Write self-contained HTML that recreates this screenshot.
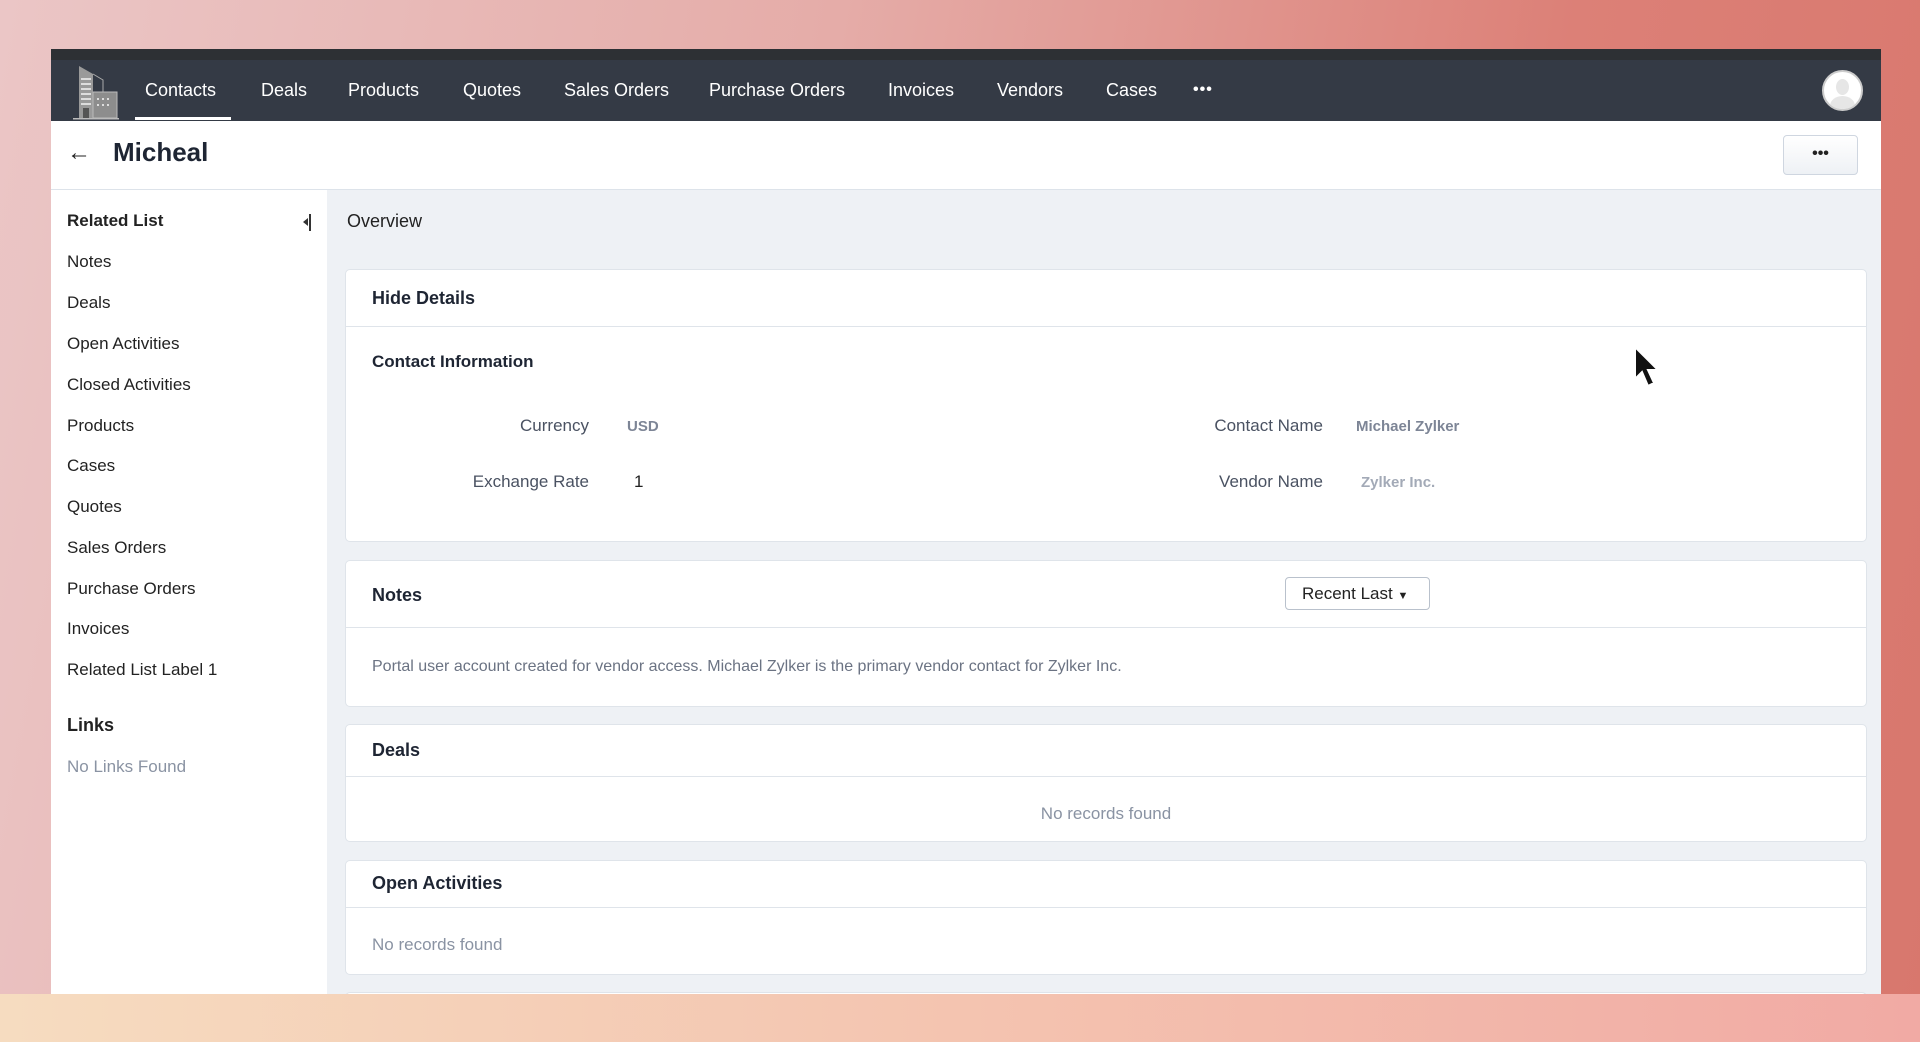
<!DOCTYPE html>
<html><head><meta charset="utf-8"><style>
*{margin:0;padding:0;box-sizing:border-box}
body{width:1920px;height:1042px;overflow:hidden;position:relative;font-family:"Liberation Sans",sans-serif;
background:linear-gradient(100deg,#ebc6c6 0%,#e5aca8 40%,#dc8077 75%,#d8776d 100%);}
.bot{position:absolute;left:0;top:994px;width:1920px;height:48px;background:linear-gradient(90deg,#f6dcc0,#f4c4b0 50%,#f1aaa4)}
.a{position:absolute;white-space:nowrap}
.frame{position:absolute;left:51px;top:49px;width:1830px;height:945px;background:#eef1f5;overflow:hidden}
.strip{position:absolute;left:0;top:0;width:1830px;height:11px;background:#2d3034}
.nav{position:absolute;left:0;top:11px;width:1830px;height:61px;background:#343a45}
.nav .a{color:#fff;font-size:18px;top:20px}
.hdr{position:absolute;left:0;top:72px;width:1830px;height:69px;background:#fff;border-bottom:1px solid #dde3ea}
.side{position:absolute;left:0;top:141px;width:276px;height:804px;background:#fff}
.side .a{font-size:17px;color:#222;left:16px}
.card{position:absolute;left:294px;width:1522px;background:#fff;border:1px solid #dfe4ea;border-radius:5px}
.card .h{position:absolute;left:0;width:100%;border-bottom:1px solid #dfe4ea}
.t{font-size:18px;font-weight:bold;color:#1e2533}
.lbl{font-size:17px;color:#4a5262}
.g{color:#8a93a3}
</style></head><body>
<div class="bot"></div>
<div class="frame">
<div class="strip"></div>
<div class="nav">
<svg class="a" style="left:18px;top:2px" width="52" height="58" viewBox="0 0 52 58"><path d="M10 4 L24 12 L24 56 L10 56Z" fill="#9a9a9a"/><path d="M24 12 L34 18 L34 30" stroke="#aaa" fill="none"/><rect x="24" y="30" width="24" height="26" fill="#8d8d8d" stroke="#bbb"/><g fill="#ddd"><rect x="12" y="16" width="10" height="2"/><rect x="12" y="21" width="10" height="2"/><rect x="12" y="26" width="10" height="2"/><rect x="12" y="31" width="10" height="2"/><rect x="12" y="36" width="10" height="2"/><rect x="12" y="41" width="10" height="2"/><rect x="14" y="46" width="6" height="10" fill="#555"/><rect x="28" y="36" width="2" height="2"/><rect x="33" y="36" width="2" height="2"/><rect x="38" y="36" width="2" height="2"/><rect x="28" y="42" width="2" height="2"/><rect x="33" y="42" width="2" height="2"/><rect x="38" y="42" width="2" height="2"/></g><rect x="4" y="56" width="46" height="1.5" fill="#bbb"/></svg>
<div class="a" style="left:94px">Contacts</div>
<div class="a" style="left:84px;top:57px;width:96px;height:3px;background:#fff"></div>
<div class="a" style="left:210px">Deals</div>
<div class="a" style="left:297px">Products</div>
<div class="a" style="left:412px">Quotes</div>
<div class="a" style="left:513px">Sales Orders</div>
<div class="a" style="left:658px">Purchase Orders</div>
<div class="a" style="left:837px">Invoices</div>
<div class="a" style="left:946px">Vendors</div>
<div class="a" style="left:1055px">Cases</div>
<div class="a" style="left:1142px;top:21px !important;font-weight:bold;letter-spacing:1px;font-size:16px">•••</div>
<div class="a" style="left:1771px;top:10px;width:41px;height:41px;border-radius:50%;background:#fff;border:2px solid #ccc;overflow:hidden"><div style="position:absolute;left:12px;top:7px;width:13px;height:16px;border-radius:50%;background:#e6e6e6"></div><div style="position:absolute;left:6px;top:24px;width:25px;height:20px;border-radius:50%;background:#e6e6e6"></div></div>
</div>
<div class="hdr">
<div class="a" style="left:16px;top:18px;font-size:24px;color:#222">←</div>
<div class="a" style="left:62px;top:16px;font-size:26px;font-weight:bold;color:#1e2533">Micheal</div>
<div class="a" style="left:1732px;top:14px;width:75px;height:40px;border:1px solid #cfd6e0;border-radius:4px;background:linear-gradient(#fff,#eef1f5);text-align:center;line-height:36px;font-size:16px;font-weight:bold;color:#222">•••</div>
</div>
<div class="side">
<div class="a" style="top:21px;font-weight:bold">Related List</div>
<div class="a" style="left:258px;top:24px;width:2px;height:17px;background:#333"></div>
<div class="a" style="left:252px;top:28px;border:4px solid transparent;border-right:5px solid #333;border-left:0"></div>
<div class="a" style="top:62px">Notes</div>
<div class="a" style="top:103px">Deals</div>
<div class="a" style="top:144px">Open Activities</div>
<div class="a" style="top:185px">Closed Activities</div>
<div class="a" style="top:226px">Products</div>
<div class="a" style="top:266px">Cases</div>
<div class="a" style="top:307px">Quotes</div>
<div class="a" style="top:348px">Sales Orders</div>
<div class="a" style="top:389px">Purchase Orders</div>
<div class="a" style="top:429px">Invoices</div>
<div class="a" style="top:470px">Related List Label 1</div>
<div class="a" style="top:525px;font-weight:bold;font-size:18px">Links</div>
<div class="a" style="top:567px;color:#8a93a3">No Links Found</div>
</div>
<div class="a" style="left:296px;top:162px;font-size:18px;color:#222">Overview</div>
<div class="card" style="top:220px;height:273px">
<div class="h" style="top:0;height:57px"></div>
<div class="a t" style="left:26px;top:18px">Hide Details</div>
<div class="a" style="left:26px;top:82px;font-size:17px;font-weight:bold;color:#1e2533">Contact Information</div>
<div class="a lbl" style="right:1277px;top:146px">Currency</div>
<div class="a" style="left:281px;top:148px;font-size:15px;font-weight:bold;color:#7d8596">USD</div>
<div class="a lbl" style="right:1277px;top:202px">Exchange Rate</div>
<div class="a" style="left:288px;top:202px;font-size:17px;color:#222">1</div>
<div class="a lbl" style="right:543px;top:146px">Contact Name</div>
<div class="a" style="left:1010px;top:148px;font-size:15px;font-weight:bold;color:#7d8596">Michael Zylker</div>
<div class="a lbl" style="right:543px;top:202px">Vendor Name</div>
<div class="a" style="left:1015px;top:204px;font-size:15px;font-weight:bold;color:#a3aab7">Zylker Inc.</div>
</div>
<div class="card" style="top:511px;height:147px">
<div class="h" style="top:0;height:67px"></div>
<div class="a t" style="left:26px;top:24px">Notes</div>
<div class="a" style="left:939px;top:16px;width:145px;height:33px;border:1px solid #b9c1cc;border-radius:4px;font-size:17px;color:#222;line-height:31px;padding-left:16px">Recent Last <span style="font-size:11px">▼</span></div>
<div class="a" style="left:26px;top:97px;font-size:16px;color:#6b7383">Portal user account created for vendor access. Michael Zylker is the primary vendor contact for Zylker Inc.</div>
</div>
<div class="card" style="top:675px;height:118px">
<div class="h" style="top:0;height:52px"></div>
<div class="a t" style="left:26px;top:15px">Deals</div>
<div class="a g" style="left:0;width:100%;text-align:center;top:79px;font-size:17px">No records found</div>
</div>
<div class="card" style="top:811px;height:115px">
<div class="h" style="top:0;height:47px"></div>
<div class="a t" style="left:26px;top:12px">Open Activities</div>
<div class="a g" style="left:26px;top:74px;font-size:17px">No records found</div>
</div>
<div class="card" style="top:943px;height:40px"></div>
</div>
<svg class="a" style="left:1632px;top:345px" width="32" height="46" viewBox="0 0 32 46"><path d="M3 2 L3 34 L10 27 L16 41 L22 38 L16 25 L26 25 Z" fill="#111" stroke="#fff" stroke-width="2"/></svg>
</body></html>
